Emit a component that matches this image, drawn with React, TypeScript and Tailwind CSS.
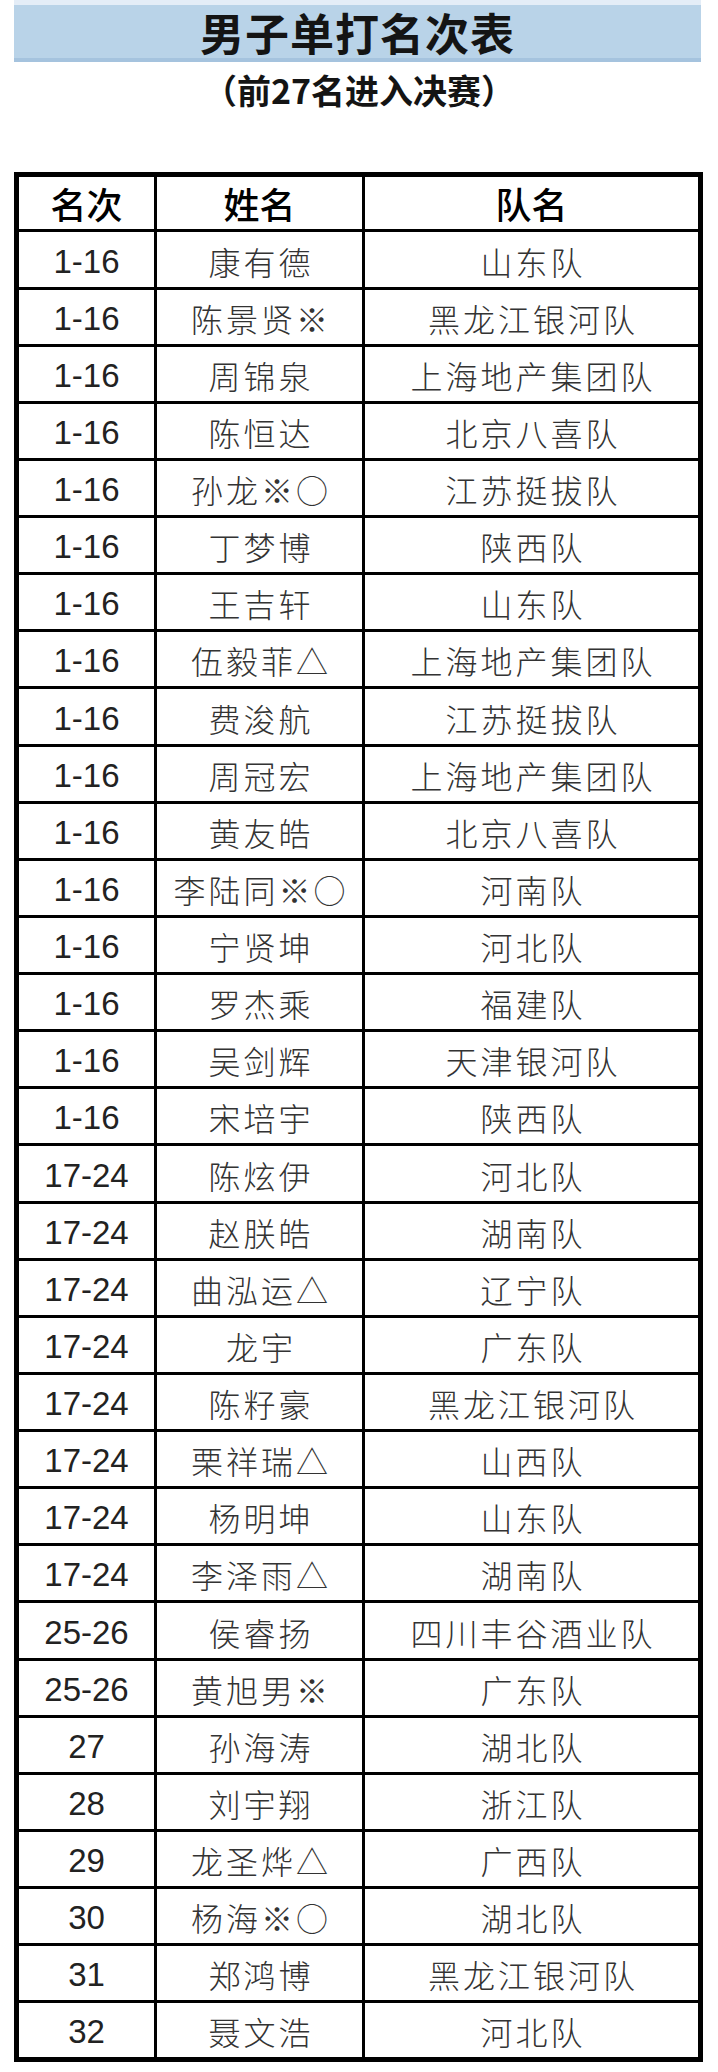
const ROWS: [string, string, string][] = [
  ["1-16", "康有德", "山东队"],
  ["1-16", "陈景贤※", "黑龙江银河队"],
  ["1-16", "周锦泉", "上海地产集团队"],
  ["1-16", "陈恒达", "北京八喜队"],
  ["1-16", "孙龙※○", "江苏挺拔队"],
  ["1-16", "丁梦博", "陕西队"],
  ["1-16", "王吉轩", "山东队"],
  ["1-16", "伍毅菲△", "上海地产集团队"],
  ["1-16", "费浚航", "江苏挺拔队"],
  ["1-16", "周冠宏", "上海地产集团队"],
  ["1-16", "黄友皓", "北京八喜队"],
  ["1-16", "李陆同※○", "河南队"],
  ["1-16", "宁贤坤", "河北队"],
  ["1-16", "罗杰乘", "福建队"],
  ["1-16", "吴剑辉", "天津银河队"],
  ["1-16", "宋培宇", "陕西队"],
  ["17-24", "陈炫伊", "河北队"],
  ["17-24", "赵朕皓", "湖南队"],
  ["17-24", "曲泓运△", "辽宁队"],
  ["17-24", "龙宇", "广东队"],
  ["17-24", "陈籽豪", "黑龙江银河队"],
  ["17-24", "栗祥瑞△", "山西队"],
  ["17-24", "杨明坤", "山东队"],
  ["17-24", "李泽雨△", "湖南队"],
  ["25-26", "侯睿扬", "四川丰谷酒业队"],
  ["25-26", "黄旭男※", "广东队"],
  ["27", "孙海涛", "湖北队"],
  ["28", "刘宇翔", "浙江队"],
  ["29", "龙圣烨△", "广西队"],
  ["30", "杨海※○", "湖北队"],
  ["31", "郑鸿博", "黑龙江银河队"],
  ["32", "聂文浩", "河北队"],
];

const cjk = "font-['Noto_Sans_CJK_SC',sans-serif]";
const num = "font-['Liberation_Sans','Noto_Sans_CJK_SC',sans-serif]";

function rowClass(i: number) {
  if (i === ROWS.length - 1) return "h-[54px]";
  // spread the 57.13px pitch of the scan over whole pixels
  return i % 8 === 0 ? "h-[58px] border-b-[3px] border-black" : "h-[57px] border-b-[3px] border-black";
}

export default function App() {
  return (
    <div className="w-[718px] h-[2072px] bg-white text-black">
      <div className="ml-[14px] w-[687px] h-[62px] border-t-[5px] border-[#e4edf7] bg-[#b9d3e8] border-b-[4px] border-b-[#a5c3de] flex items-center justify-center">
        <h1 className={`${cjk} text-[44px] leading-none font-bold text-[#141414] tracking-[1px]`}>男子单打名次表</h1>
      </div>
      <p className={`${cjk} mt-[9px] h-[38px] text-center text-[34px] leading-[38px] font-bold text-[#141414]`}>
        （前27名进入决赛）
      </p>

      <div className="mt-[63px] ml-[14px] w-[689px] border-[5px] border-black">
        <div className="flex h-[55px] border-b-[3px] border-black">
          <div className={`${cjk} w-[135px] flex items-center justify-center text-[36px] font-medium text-black`}>名次</div>
          <div className={`${cjk} w-[208px] border-l-[3px] border-black flex items-center justify-center text-[36px] font-medium text-black`}>姓名</div>
          <div className={`${cjk} flex-1 border-l-[3px] border-black flex items-center justify-center text-[36px] font-medium text-black`}>队名</div>
        </div>
        {ROWS.map(([rank, name, team], i) => (
          <div key={i} className={`flex ${rowClass(i)}`}>
            <div className={`${num} w-[135px] flex items-center justify-center pt-[4px] text-[33px] font-normal text-[#222]`}>{rank}</div>
            <div className={`${cjk} w-[208px] border-l-[3px] border-black flex items-center justify-center pl-[3px] pt-[2px] text-[32px] font-light tracking-[3px] text-[#333]`}>
              {name}
            </div>
            <div className={`${cjk} flex-1 border-l-[3px] border-black flex items-center justify-center pl-[3px] pt-[2px] text-[32px] font-light tracking-[3px] text-[#333]`}>
              {team}
            </div>
          </div>
        ))}
      </div>
    </div>
  );
}
